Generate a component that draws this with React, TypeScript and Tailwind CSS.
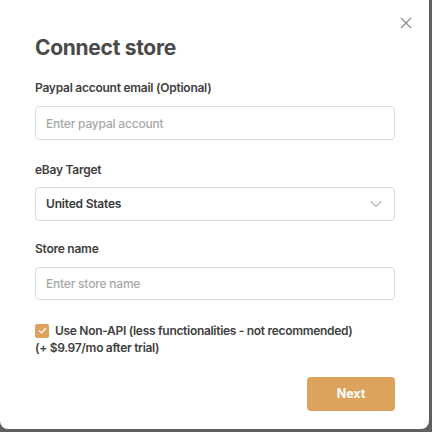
import { useState } from 'react';

function CloseIcon() {
    return (
        <svg width="12" height="12" viewBox="0 0 12 12" fill="none" stroke="#8a8a8a" strokeWidth="1.2">
            <path d="M1 1L11 11M11 1L1 11" />
        </svg>
    );
}

function Chevron() {
    return (
        <svg width="12" height="8" viewBox="0 0 12 8" fill="none" stroke="#b5b5b5" strokeWidth="1.1">
            <path d="M1 1.5L6 6.5L11 1.5" />
        </svg>
    );
}

export default function App() {
    const [checked, setChecked] = useState(true);

    return (
        <div className="w-[432px] h-[432px] bg-[#5f5f5f] overflow-hidden font-['Inter','Liberation_Sans',sans-serif]">
            <div className="relative w-[429px] h-[429px] bg-white rounded-b-[8px] pl-[35px] pr-[34px] pt-[34px] flex flex-col">
                <button className="absolute top-[17px] right-[17px] p-0">
                    <CloseIcon />
                </button>

                <h2 className="text-[21px] leading-[28px] font-bold text-[#4a4a4a] tracking-[-0.3px]">Connect store</h2>

                <label className="mt-[17px] text-[12px] leading-[18px] font-semibold text-[#404040] tracking-[-0.25px]">
                    Paypal account email (Optional)
                </label>
                <input
                    className="mt-[9px] h-[34px] w-full border border-[#dedede] rounded-[4px] px-[10px] text-[12px] font-medium tracking-[-0.2px] placeholder:text-[#a8a8a8] outline-none"
                    placeholder="Enter paypal account"
                />

                <label className="mt-[21px] text-[12px] leading-[18px] font-semibold text-[#404040] tracking-[-0.25px]">eBay Target</label>
                <div className="mt-[8px] h-[34px] w-full border border-[#dedede] rounded-[4px] pl-[10px] pr-[12px] flex items-center justify-between">
                    <span className="text-[12px] font-semibold text-[#383838] tracking-[-0.2px]">United States</span>
                    <Chevron />
                </div>

                <label className="mt-[19px] text-[12px] leading-[18px] font-semibold text-[#404040] tracking-[-0.25px]">Store name</label>
                <input
                    className="mt-[9px] h-[33px] w-full border border-[#dedede] rounded-[4px] px-[10px] text-[12px] font-medium tracking-[-0.2px] placeholder:text-[#a8a8a8] outline-none"
                    placeholder="Enter store name"
                />

                <div className="mt-[22px] text-[12px] leading-[17px] font-semibold text-[#404040] tracking-[-0.3px]">
                    <div className="flex items-center gap-[6px]">
                        <button
                            onClick={() => setChecked(!checked)}
                            className="w-[14px] h-[14px] rounded-[2px] bg-[#dda25c] flex items-center justify-center shrink-0"
                        >
                            {checked && (
                                <svg width="9" height="7" viewBox="0 0 9 7" fill="none" stroke="white" strokeWidth="1.2">
                                    <path d="M1 3.5L3.5 6L8 1" />
                                </svg>
                            )}
                        </button>
                        <span className="whitespace-nowrap">Use Non-API (less functionalities - not recommended)</span>
                    </div>
                    <div>(+ $9.97/mo after trial)</div>
                </div>

                <div className="mt-[21px] flex justify-end">
                    <button className="w-[88px] h-[34px] rounded-[4px] bg-[#dda25c] text-white text-[12.5px] font-bold">
                        Next
                    </button>
                </div>
            </div>
        </div>
    );
}
